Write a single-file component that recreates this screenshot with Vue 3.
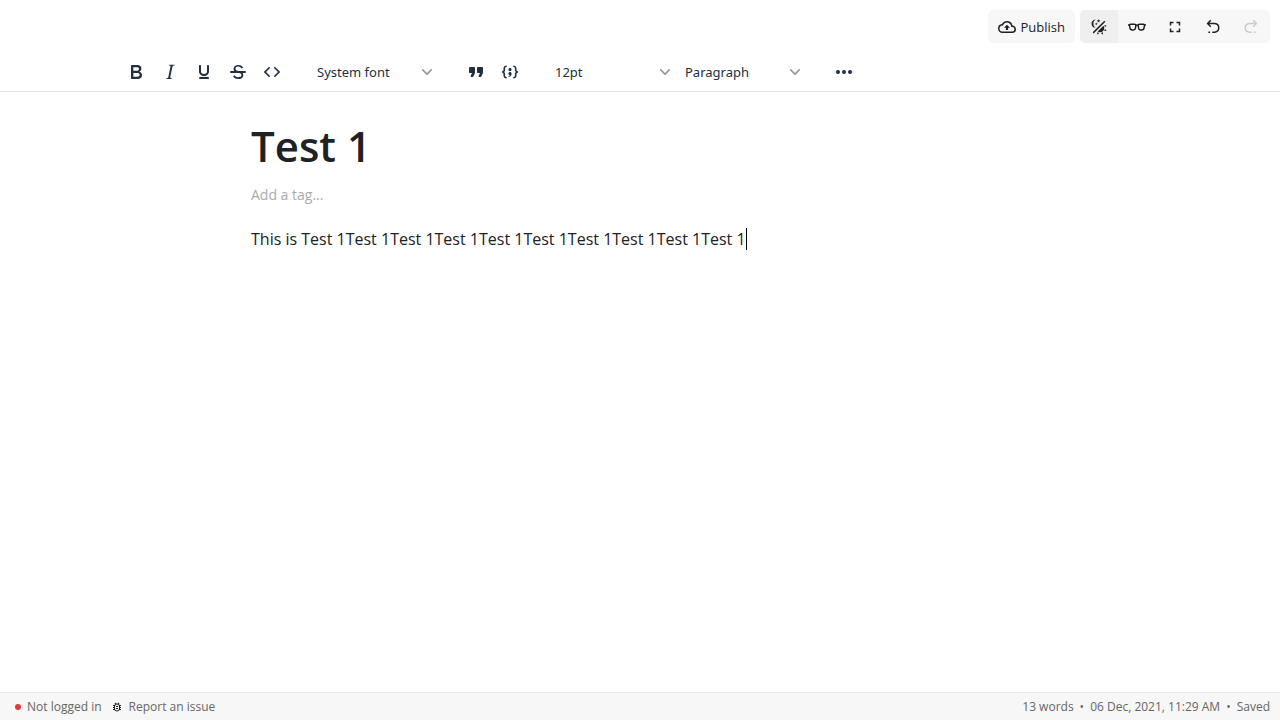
<script setup>
import { ref } from 'vue'

const title = ref('Test 1')
const body = 'This is ' + 'Test 1'.repeat(10)

const formats = [
  { name: 'Bold', d: 'M7.8 19c-.3 0-.5 0-.6-.2l-.2-.5V5.7c0-.2 0-.4.2-.5l.6-.2h5c1.5 0 2.7.3 3.5 1 .7.6 1.1 1.4 1.1 2.5a3 3 0 0 1-.6 1.9c-.4.6-1 1-1.6 1.2.4.1.9.3 1.3.6s.8.7 1 1.2c.4.4.5 1 .5 1.6 0 1.3-.4 2.3-1.3 3-.8.7-2.1 1-3.8 1H7.8Zm5-8.3c.6 0 1.2-.1 1.6-.5.4-.3.6-.7.6-1.3 0-1.1-.8-1.7-2.3-1.7H9.3v3.5h3.4Zm.5 6c.7 0 1.3-.1 1.7-.4.4-.4.6-.9.6-1.5s-.2-1-.7-1.4c-.4-.3-1-.4-2-.4H9.4v3.8h4Z' },
  { name: 'Italic', d: 'm16.7 4.7-.1.9h-.3c-.6 0-1 0-1.4.3-.3.3-.4.6-.5 1.1l-2.1 9.8v.6c0 .5.4.8 1.4.8h.2l-.2.8H8l.2-.8h.2c1.1 0 1.8-.5 2-1.5l2-9.8.1-.5c0-.6-.4-.8-1.4-.8h-.3l.2-.9h5.8Z' },
  { name: 'Underline', d: 'M16 5c.6 0 1 .4 1 1v5.5a4 4 0 0 1-.4 1.8l-1 1.4a5.3 5.3 0 0 1-5.5 1 5 5 0 0 1-1.6-1c-.5-.4-.8-.9-1.1-1.4a4 4 0 0 1-.4-1.8V6c0-.6.4-1 1-1s1 .4 1 1v5.5c0 .3 0 .6.2 1l.6.7a3.3 3.3 0 0 0 2.2.8 3.4 3.4 0 0 0 2.2-.8c.3-.2.4-.5.6-.8l.2-.9V6c0-.6.4-1 1-1ZM8 17h8c.6 0 1 .4 1 1s-.4 1-1 1H8a1 1 0 0 1 0-2Z' },
  { name: 'Strikethrough', d: 'M15.6 8.5c-.5-.7-1-1.1-1.3-1.3-.6-.4-1.3-.6-2-.6-2.7 0-2.8 1.7-2.8 2.1 0 1.6 1.8 2 3.2 2.3 4.4.9 4.6 2.8 4.6 3.9 0 1.4-.7 4.1-5 4.1A6.2 6.2 0 0 1 7 16.4l1.5-1.1c.4.6 1.6 2 3.7 2 1.6 0 2.5-.4 3-1.2.4-.8.3-2-.8-2.6-.7-.4-1.6-.7-2.9-1-1-.2-3.9-.8-3.9-3.6C7.6 6 10.3 5 12.4 5c2.9 0 4.2 1.6 4.7 2.4l-1.5 1.1ZM5 11h14a1 1 0 0 1 0 2H5a1 1 0 0 1 0-2Z' },
  { name: 'Code', d: 'M9.8 15.7c.3.3.3.8 0 1-.3.4-.9.4-1.2 0l-4.4-4.1a.8.8 0 0 1 0-1.2l4.4-4.2c.3-.3.9-.3 1.2 0 .3.3.3.8 0 1.1L6 12l3.8 3.7ZM14.2 15.7c-.3.3-.3.8 0 1 .4.4.9.4 1.2 0l4.4-4.1c.3-.3.3-.9 0-1.2l-4.4-4.2a.8.8 0 0 0-1.2 0c-.3.3-.3.8 0 1.1L18 12l-3.8 3.7Z' },
]
const blocks = [
  { name: 'Blockquote', d: 'M7.5 17h.9c.4 0 .7-.2.9-.6L11 13V8c0-.6-.4-1-1-1H6a1 1 0 0 0-1 1v4c0 .6.4 1 1 1h2l-1.3 2.7a1 1 0 0 0 .8 1.3Zm8 0h.9c.4 0 .7-.2.9-.6L19 13V8c0-.6-.4-1-1-1h-4a1 1 0 0 0-1 1v4c0 .6.4 1 1 1h2l-1.3 2.7a1 1 0 0 0 .8 1.3Z' },
  { name: 'Code block', d: 'M7.1 10a2.8 2.8 0 0 1-.8 2 2.8 2.8 0 0 1 .8 2v1.7c0 .3.1.6.4.8.2.3.5.4.8.4.3 0 .4.2.4.4v.8c0 .2-.1.4-.4.4-.7 0-1.4-.3-2-.8-.5-.6-.8-1.3-.8-2V14c0-.3-.1-.6-.4-.8-.2-.3-.5-.4-.8-.4a.4.4 0 0 1-.4-.4v-.8c0-.2.2-.4.4-.4.3 0 .6-.1.8-.4.3-.2.4-.5.4-.8V8.3c0-.7.3-1.4.8-2 .6-.5 1.3-.8 2-.8.3 0 .4.2.4.4v.8c0 .2-.1.4-.4.4-.3 0-.6.1-.8.4-.3.2-.4.5-.4.8V10Zm9.8 0V8.3c0-.3-.1-.6-.4-.8-.2-.3-.5-.4-.8-.4a.4.4 0 0 1-.4-.4V6c0-.2.1-.4.4-.4.7 0 1.4.3 2 .8.5.6.8 1.3.8 2V10c0 .3.1.6.4.8.2.3.5.4.8.4.2 0 .4.2.4.4v.8c0 .2-.2.4-.4.4-.3 0-.6.1-.8.4-.3.2-.4.5-.4.8v1.7c0 .7-.3 1.4-.8 2-.6.5-1.3.8-2 .8a.4.4 0 0 1-.4-.4v-.8c0-.2.1-.4.4-.4.3 0 .6-.1.8-.4.3-.2.4-.5.4-.8V14a2.8 2.8 0 0 1 .8-2 2.8 2.8 0 0 1-.8-2Zm-3.3-.4c0 .4-.1.8-.5 1.1-.3.3-.7.5-1.1.5-.4 0-.8-.2-1.1-.5-.4-.3-.5-.7-.5-1.1 0-.5.1-.9.5-1.2.3-.3.7-.4 1.1-.4.4 0 .8.1 1.1.4.4.3.5.7.5 1.2ZM12 12c.4 0 .8.1 1.1.5.4.3.5.7.5 1.1 0 1-.1 1.6-.5 2a3 3 0 0 1-1.1 1c-.4.3-.8.4-1.1.4a.5.5 0 0 1-.5-.5V16a3 3 0 0 0 1-.2l.6-.6c-.6 0-1-.2-1.3-.5-.2-.3-.3-.7-.3-1 0-.5.1-1 .5-1.2.3-.4.7-.5 1.1-.5Z' },
]
const chevron = 'M8.7 2.2c.3-.3.8-.3 1 0 .4.4.4.9 0 1.2L5.7 7.8c-.3.3-.9.3-1.2 0L.2 3.4a.8.8 0 0 1 0-1.2c.3-.3.8-.3 1.1 0L5 6l3.7-3.8Z'
</script>

<template>
  <div class="editor">
    <header class="top">
      <button class="publish" type="button">
        <svg viewBox="0 0 24 24" class="icon"><path d="M19.35 10.04A7.49 7.49 0 0 0 12 4C9.11 4 6.6 5.64 5.35 8.04A5.994 5.994 0 0 0 0 14a6 6 0 0 0 6 6h13a5 5 0 0 0 5-5c0-2.64-2.05-4.78-4.65-4.96zM19 18H6a4 4 0 0 1-4-4c0-2.05 1.53-3.76 3.56-3.97l1.07-.11.5-.95A5.469 5.469 0 0 1 12 6c2.62 0 4.88 1.86 5.39 4.43l.3 1.5 1.53.11A2.98 2.98 0 0 1 22 15a3 3 0 0 1-3 3zM8 13h2.55v3h2.9v-3H16l-4-4-4 4z" /></svg>
        <span>Publish</span>
      </button>
      <div class="actions">
        <button type="button" class="active" aria-label="Toggle theme">
          <svg viewBox="0 0 24 24" class="icon"><path d="M7.5,2C5.71,3.15 4.5,5.18 4.5,7.5C4.5,9.82 5.71,11.85 7.53,13C4.46,13 2,10.54 2,7.5A5.5,5.5 0 0,1 7.5,2M19.07,3.5L20.5,4.93L4.93,20.5L3.5,19.07L19.07,3.5M12.89,5.93L11.41,5L9.97,6L10.39,4.3L9,3.24L10.75,3.12L11.33,1.47L12,3.1L13.73,3.13L12.38,4.26L12.89,5.93M9.59,9.54L8.43,8.81L7.31,9.59L7.65,8.27L6.56,7.44L7.92,7.35L8.37,6.06L8.88,7.33L10.24,7.36L9.19,8.23L9.59,9.54M19,13.5A5.5,5.5 0 0,1 13.5,19C12.28,19 11.15,18.6 10.24,17.93L17.93,10.24C18.6,11.15 19,12.28 19,13.5M14.6,20.08L17.37,18.93L17.13,22.28L14.6,20.08M18.93,17.38L20.08,14.61L22.28,17.15L18.93,17.38M20.08,12.42L18.94,9.64L22.28,9.88L20.08,12.42M9.63,18.93L12.4,20.08L9.87,22.27L9.63,18.93Z" /></svg>
        </button>
        <button type="button" aria-label="Read mode">
          <svg viewBox="0 0 24 24" class="icon line"><path d="M3.5 8.2H8.5c1.3 0 2 .7 1.9 1.9l-.4 2.9c-.3 2-1.3 3-3.1 3H5.6c-1.8 0-2.8-1-3-2.800L2 10c-.1-1.100.4-1.800 1.500-1.800ZM20.500 8.200h-5c-1.300 0-2 .7-1.900 1.900l.4 2.900c.3 2 1.300 3 3.100 3h1.300c1.800 0 2.800-1 3-2.800L22 10c.1-1.100-.4-1.800-1.500-1.800ZM10 10.200c1-.9 3-.9 4 0M0 9.200h2M22 9.200h2" /></svg>
        </button>
        <button type="button" aria-label="Fullscreen">
          <svg viewBox="0 0 24 24" class="icon"><path d="M5,5H10V7H7V10H5V5M14,5H19V10H17V7H14V5M17,14H19V19H14V17H17V14M10,17V19H5V14H7V17H10Z" /></svg>
        </button>
        <button type="button" aria-label="Undo">
          <svg viewBox="0 0 24 24" class="icon line"><path d="M9 3 4.800 7.300 9 11.600M5 7.300h9.500a5.900 5.900 0 0 1 0 11.700H11M8.200 19H5.800" /></svg>
        </button>
        <button type="button" aria-label="Redo" disabled>
          <svg viewBox="0 0 24 24" class="icon line"><path d="M15 3l4.200 4.300L15 11.600M19 7.300H9.500a5.900 5.900 0 0 0 0 11.700H13M15.800 19h2.400" /></svg>
        </button>
      </div>
    </header>

    <div class="toolbar" role="toolbar" aria-label="Formatting">
      <div class="group">
        <button v-for="f in formats" :key="f.name" type="button" :aria-label="f.name">
          <svg viewBox="0 0 24 24"><path :d="f.d" /></svg>
        </button>
      </div>
      <div class="group">
        <div class="picker">
          <select aria-label="Font family"><option>System font</option><option>Serif</option></select>
          <svg viewBox="0 0 10 10"><path :d="chevron" /></svg>
        </div>
      </div>
      <div class="group">
        <button v-for="b in blocks" :key="b.name" type="button" :aria-label="b.name">
          <svg viewBox="0 0 24 24"><path :d="b.d" /></svg>
        </button>
      </div>
      <div class="group">
        <div class="picker">
          <select aria-label="Font size"><option>12pt</option><option>14pt</option></select>
          <svg viewBox="0 0 10 10"><path :d="chevron" /></svg>
        </div>
        <div class="picker">
          <select aria-label="Block format"><option>Paragraph</option><option>Heading 1</option></select>
          <svg viewBox="0 0 10 10"><path :d="chevron" /></svg>
        </div>
      </div>
      <div class="group">
        <button type="button" aria-label="More">
          <svg viewBox="0 0 24 24"><circle cx="6" cy="12" r="2" /><circle cx="12" cy="12" r="2" /><circle cx="18" cy="12" r="2" /></svg>
        </button>
      </div>
    </div>

    <main class="page">
      <input v-model="title" class="title" type="text" aria-label="Note title">
      <input class="tag" type="text" placeholder="Add a tag..." aria-label="Add a tag">
      <div class="content" contenteditable="true" role="textbox" aria-multiline="true" aria-label="Note content" spellcheck="false"><p>{{ body }}<span class="caret"></span></p></div>
    </main>

    <footer class="status">
      <div class="side">
        <button type="button" class="login"><span class="dot"></span>Not logged in</button>
        <button type="button" class="report">
          <svg viewBox="0 0 24 24"><path d="M20 8h-2.81a5.985 5.985 0 0 0-1.82-1.96L17 4.41 15.59 3l-2.17 2.17a6.002 6.002 0 0 0-2.83 0L8.41 3 7 4.41l1.62 1.63C7.88 6.55 7.26 7.22 6.81 8H4v2h2.09C6.03 10.33 6 10.66 6 11v1H4v2h2v1c0 .34.04.67.09 1H4v2h2.81a6 6 0 0 0 10.38 0H20v-2h-2.09c.06-.33.09-.66.09-1v-1h2v-2h-2v-1c0-.34-.03-.67-.09-1H20V8zm-4 7a4 4 0 0 1-8 0v-4a4 4 0 0 1 8 0v4zm-2-5v2h-4v-2h4zm-4 4h4v2h-4z" /></svg>
          Report an issue
        </button>
      </div>
      <div class="side info">
        <span>13 words</span><span>•</span><span>06 Dec, 2021, 11:29 AM</span><span>•</span><span>Saved</span>
      </div>
    </footer>
  </div>
</template>

<style>
body {
  margin: 0;
}
</style>

<style scoped>
.editor {
  display: flex;
  flex-direction: column;
  min-height: 100vh;
  background: #fff;
  color: #202124;
  font-family: "Open Sans", "Noto Sans", sans-serif;
}
button,
input,
select {
  margin: 0;
  padding: 0;
  border: 0;
  outline: 0;
  background: none;
  color: inherit;
  font: inherit;
}
svg {
  display: block;
  fill: currentColor;
}
.top {
  display: flex;
  justify-content: flex-end;
  gap: 5px;
  padding: 10px 10px 0;
}
.icon {
  width: 18px;
  height: 18px;
}
.line {
  fill: none;
  stroke: currentColor;
  stroke-width: 2;
}
.publish {
  display: flex;
  align-items: center;
  gap: 5px;
  height: 33px;
  padding: 0 10px;
  border-radius: 5px;
  background: #f7f7f7;
  font-size: 13px;
}
.actions {
  display: flex;
  overflow: hidden;
  border-radius: 5px;
  background: #f7f7f7;
}
.actions button {
  height: 33px;
  padding: 0 10px;
}
.actions .active {
  background: #efefef;
}
.actions button:disabled {
  color: #ccc;
}
.toolbar {
  display: flex;
  height: 39px;
  margin-top: 9px;
  padding-left: 119px;
  border-bottom: 1px solid #e5e5e5;
  color: #222f3e;
}
.group {
  display: flex;
  align-items: center;
  padding-right: 20px;
}
.group button {
  display: grid;
  place-items: center;
  width: 34px;
  height: 34px;
}
.group button svg {
  width: 24px;
  height: 24px;
}
.picker {
  display: grid;
  align-items: center;
  width: 130px;
}
.picker select,
.picker svg {
  grid-area: 1 / 1;
}
.picker select {
  height: 34px;
  padding: 0 24px 0 8px;
  appearance: none;
  font-family: "Noto Sans", sans-serif;
  font-size: 13px;
}
.picker svg {
  justify-self: end;
  width: 10px;
  height: 10px;
  margin-right: 7px;
  color: #9097a0;
  pointer-events: none;
}
.page {
  display: flex;
  flex: 1;
  flex-direction: column;
  width: 100%;
  max-width: 778px;
  margin: 0 auto;
  padding-top: 23px;
}
.title {
  height: 60px;
  font-size: 42px;
  font-weight: 600;
}
.tag {
  height: 24px;
  margin-top: 7px;
  font-size: 14px;
}
.tag::placeholder {
  color: #aaa;
  opacity: 1;
}
.content {
  flex: 1;
  margin-top: 21px;
  outline: 0;
  font-size: 16px;
  line-height: 24px;
}
.content p {
  margin: 0;
}
.caret {
  display: inline-block;
  width: 1px;
  height: 22px;
  background: #000;
  vertical-align: -5px;
}
.status {
  display: flex;
  justify-content: space-between;
  height: 27px;
  padding: 0 10px 0 15px;
  border-top: 1px solid #e5e5e5;
  background: #f7f7f7;
  color: #666;
  font-size: 12px;
}
.side,
.side button {
  display: flex;
  align-items: center;
}
.side {
  gap: 9px;
}
.side button {
  gap: 6px;
}
.side svg {
  width: 12px;
  height: 12px;
  color: #202124;
}
.dot {
  width: 6px;
  height: 6px;
  border-radius: 50%;
  background: #e53935;
}
.info {
  gap: 6px;
}
</style>
